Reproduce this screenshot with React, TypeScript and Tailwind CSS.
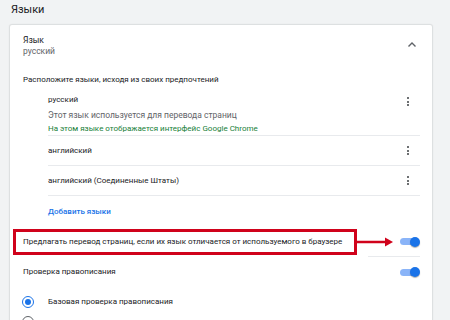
const font = { fontFamily: "Roboto, 'Noto Sans', sans-serif" };

const Kebab = () => (
  <div className="flex flex-col items-center gap-[1.5px] w-[4px]">
    <span className="block w-[2px] h-[2px] rounded-full bg-[#3c4043]" />
    <span className="block w-[2px] h-[2px] rounded-full bg-[#3c4043]" />
    <span className="block w-[2px] h-[2px] rounded-full bg-[#3c4043]" />
  </div>
);

const Toggle = () => (
  <div className="relative w-[20px] h-[10px] flex items-center">
    <div className="w-[18px] h-[7px] rounded-full bg-[#8ab4f8]" />
    <div className="absolute right-0 top-0 w-[10px] h-[10px] rounded-full bg-[#1a73e8] shadow-[0_1px_1px_rgba(0,0,0,0.3)]" />
  </div>
);

const LangItem = ({ name }: { name: string }) => (
  <div className="ml-[38px] mr-[12px] h-[30px] flex items-center justify-between border-b border-[#e8eaed]">
    <span className="text-[#202124]">{name}</span>
    <div className="mr-[10px]">
      <Kebab />
    </div>
  </div>
);

export default function App() {
  return (
    <div className="w-[450px] h-[320px] overflow-hidden bg-[#f1f3f4] text-[8px]" style={font}>
      {/* section title */}
      <div className="h-[25px] pl-[11px] pt-[3px] text-[11px] leading-[14px] text-[#202124]">Языки</div>

      {/* card */}
      <div className="ml-[10px] w-[422px] h-[320px] bg-white rounded-[2px] shadow-[0_0_1px_1px_rgba(60,64,67,0.12)]">
        {/* language header */}
        <div className="h-[45px] pl-[13px] pr-[15px] pt-[10px] flex justify-between">
          <div className="leading-[11px]">
            <div className="text-[#202124] text-[8.5px]">Язык</div>
            <div className="text-[#5f6368] text-[8.5px]">русский</div>
          </div>
          <svg width="10" height="10" viewBox="0 0 10 10" className="mt-[5px]">
            <path d="M1.5 6.5 L5 3 L8.5 6.5" fill="none" stroke="#5f6368" strokeWidth="1.4" />
          </svg>
        </div>

        <div className="h-[20px] pl-[13px] flex items-center text-[#202124]">
          Расположите языки, исходя из своих предпочтений
        </div>

        {/* first language */}
        <div className="ml-[38px] mr-[12px] h-[46px] pt-[3px] flex justify-between border-b border-[#e8eaed]">
          <div className="leading-[14.5px]">
            <div className="text-[#202124]">русский</div>
            <div className="text-[#5f6368] text-[8.5px]">Этот язык используется для перевода страниц</div>
            <div className="text-[#188038]">На этом языке отображается интерфейс Google Chrome</div>
          </div>
          <div className="mr-[10px] mt-[4px]">
            <Kebab />
          </div>
        </div>
        <LangItem name="английский" />
        <LangItem name="английский (Соединенные Штаты)" />

        <div className="h-[31px] ml-[38px] flex items-center text-[#1a73e8] font-medium">Добавить языки</div>

        {/* translate offer */}
        <div className="h-[29px] flex items-center pr-[12px]">
          <div className="ml-[3px] w-[344px] h-[26px] border-[3px] border-[#d0021b] pl-[7px] flex items-center whitespace-nowrap text-[#202124]">
            Предлагать перевод страниц, если их язык отличается от используемого в браузере
          </div>
          <svg width="38" height="12" viewBox="0 0 38 12" className="-ml-[1px]">
            <path d="M0 6 H31" stroke="#d0021b" strokeWidth="2.5" />
            <path d="M29 1.5 L37 6 L29 10.5 Z" fill="#d0021b" />
          </svg>
          <div className="ml-auto">
            <Toggle />
          </div>
        </div>
        <div className="h-px ml-[358px] mr-[12px] bg-[#e8eaed]" />

        {/* spell check */}
        <div className="h-[30px] pl-[13px] pr-[12px] flex items-center justify-between text-[#202124]">
          <span>Проверка правописания</span>
          <Toggle />
        </div>

        <div className="h-[30px] pl-[12px] flex items-center text-[#202124]">
          <div className="w-[12px] h-[12px] rounded-full border-[1.5px] border-[#1a73e8] flex items-center justify-center">
            <div className="w-[6px] h-[6px] rounded-full bg-[#1a73e8]" />
          </div>
          <span className="ml-[14px]">Базовая проверка правописания</span>
        </div>
        <div className="pl-[12px] -mt-[1px]">
          <div className="w-[12px] h-[12px] rounded-full border-[1.5px] border-[#5f6368]" />
        </div>
      </div>
    </div>
  );
}
